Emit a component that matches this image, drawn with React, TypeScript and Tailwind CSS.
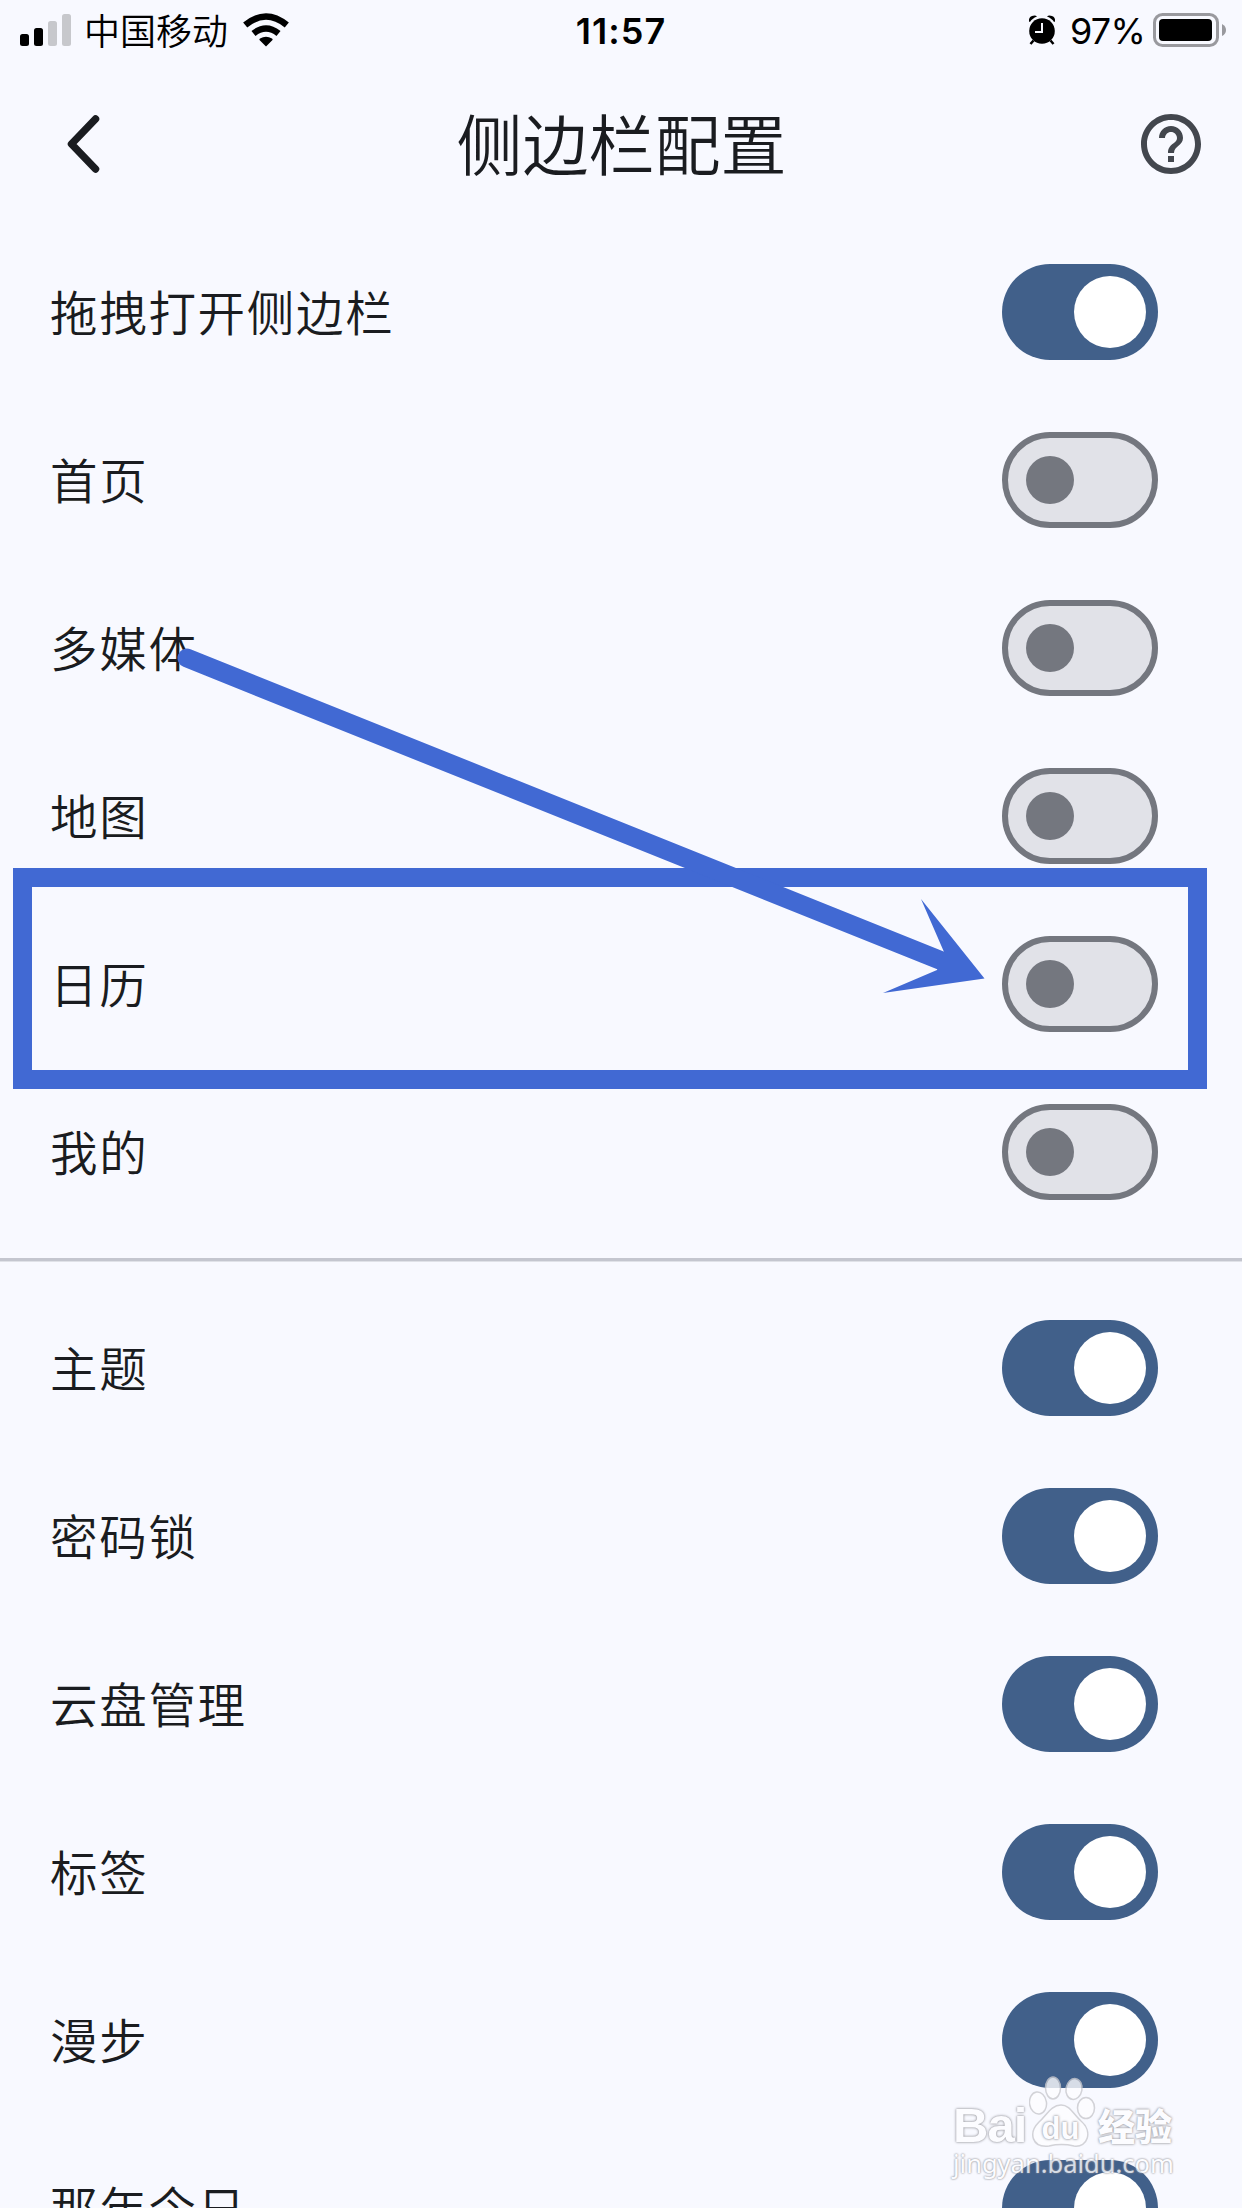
import clsx from 'clsx'

interface SettingItem {
  label: string
  on: boolean
}

const primaryItems: SettingItem[] = [
  { label: '拖拽打开侧边栏', on: true },
  { label: '首页', on: false },
  { label: '多媒体', on: false },
  { label: '地图', on: false },
  { label: '日历', on: false },
  { label: '我的', on: false },
]

const secondaryItems: SettingItem[] = [
  { label: '主题', on: true },
  { label: '密码锁', on: true },
  { label: '云盘管理', on: true },
  { label: '标签', on: true },
  { label: '漫步', on: true },
  { label: '那年今日', on: true },
]

function StatusBar() {
  return (
    <header className="grid h-[60px] grid-cols-3 items-center text-black">
      <div className="flex items-center pl-5">
        <svg width="51" height="32" viewBox="0 0 51 32" aria-hidden>
          <rect x="0" y="20" width="9" height="12" rx="2.5" />
          <rect x="14" y="14" width="9" height="18" rx="2.5" />
          <rect x="28" y="7" width="9" height="25" rx="2.5" fill="#c7c8cc" />
          <rect x="42" y="0" width="9" height="32" rx="2.5" fill="#c7c8cc" />
        </svg>
        <span className="ml-[13px] -mt-0.5 text-[36px] leading-none font-[350]">中国移动</span>
        <svg className="ml-[15px]" width="46" height="34" viewBox="0 0 46 34" aria-hidden>
          <path d="M23 33.500 16.500 27Q16 26 17 25.500 23 22 29 25.500 30 26 29.500 27Z" />
          <path d="M10.500 20.500Q23 10.500 35.500 20.500" fill="none" stroke="#000" strokeWidth="6.500" />
          <path d="M2.200 12Q23 -5 43.800 12" fill="none" stroke="#000" strokeWidth="6.500" />
        </svg>
      </div>
      <time className="pt-0.5 text-center font-['Inter','Liberation_Sans',sans-serif] text-[36px] leading-none font-semibold tracking-[1px]">
        11:57
      </time>
      <div className="flex items-center justify-end pr-[15px]">
        <svg width="28" height="30" viewBox="0 0 28 30" aria-hidden>
          <circle cx="14" cy="16" r="12.800" />
          <path d="M1 6.500Q.5 2 4 1T9 1.500Q4 3.500 2 7ZM27 6.500Q27.500 2 24 1T19 1.500Q24 3.500 26 7Z" />
          <path d="M5.500 25.500 2.500 29M22.500 25.500 25.500 29" stroke="#000" strokeWidth="2.500" />
          <path d="M14 8V17H7" fill="none" stroke="#f8f9ff" strokeWidth="2" />
        </svg>
        <span className="ml-3.5 pt-0.5 font-['Inter','Liberation_Sans',sans-serif] text-[36px] leading-none tracking-[-0.8px]">97%</span>
        <svg className="ml-2" width="74" height="34" viewBox="0 0 74 34" aria-hidden>
          <rect x="1.500" y="1.500" width="63" height="31" rx="8" fill="none" stroke="#99999e" strokeWidth="3" />
          <rect x="6" y="6" width="53" height="22" rx="4" />
          <path d="M69 11Q73 13 73 17T69 23Z" fill="#99999e" />
        </svg>
      </div>
    </header>
  )
}

function TitleBar() {
  return (
    <div className="flex h-[168px] items-center justify-between pr-[41px] pl-[64px]">
      <button type="button" aria-label="返回">
        <svg width="38" height="60" viewBox="0 0 38 60" fill="none" aria-hidden>
          <path d="M31.500 5 7.500 30 31.500 55" stroke="#1a1c20" strokeWidth="7.500" strokeLinecap="round" strokeLinejoin="round" />
        </svg>
      </button>
      <h1 className="-mt-1.5 text-[66px] leading-none font-[350]">侧边栏配置</h1>
      <button type="button" aria-label="帮助">
        <svg width="60" height="60" viewBox="2 2 20 20" fill="#43474e" aria-hidden>
          <path d="M11 18h2v-2h-2v2zm1-16C6.480 2 2 6.480 2 12s4.480 10 10 10 10-4.480 10-10S17.520 2 12 2zm0 18c-4.410 0-8-3.590-8-8s3.590-8 8-8 8 3.590 8 8-3.590 8-8 8zm0-14c-2.210 0-4 1.790-4 4h2c0-1.100.9-2 2-2s2 .9 2 2c0 2-3 1.750-3 5h2c0-2.250 3-2.500 3-5 0-2.210-1.790-4-4-4z" />
        </svg>
      </button>
    </div>
  )
}

function Toggle({ on, label }: { on: boolean; label: string }) {
  return (
    <button
      type="button"
      role="switch"
      aria-checked={on}
      aria-label={label}
      className={clsx(
        'flex h-24 w-[156px] shrink-0 items-center rounded-full',
        on ? 'justify-end bg-[#41608a] pr-3' : 'border-6 border-[#74777f] bg-[#e1e2e8] pl-[18px]',
      )}
    >
      <span className={clsx('rounded-full', on ? 'size-[72px] bg-white' : 'size-12 bg-[#74777f]')} />
    </button>
  )
}

function SettingList({ items }: { items: SettingItem[] }) {
  return (
    <ul>
      {items.map((item) => (
        <li key={item.label} className="flex h-[168px] items-center justify-between pr-[84px] pl-[50px]">
          <span className="pb-0.5 text-[47.5px] leading-none font-[350] tracking-[1.7px]">{item.label}</span>
          <Toggle on={item.on} label={item.label} />
        </li>
      ))}
    </ul>
  )
}

// Box and arrow drawn over the list to point at the calendar switch
function Annotation() {
  return (
    <svg className="pointer-events-none absolute inset-0" width="1242" height="2208" viewBox="0 0 1242 2208" aria-hidden>
      <rect x="22.500" y="877.500" width="1175" height="202" fill="none" stroke="#4169d3" strokeWidth="19" />
      <path d="M187 658 942 961" stroke="#4169d3" strokeWidth="19" strokeLinecap="round" />
      <path d="M984.500 978.500 921 899 944 952 937 970 883 993Z" fill="#4169d3" />
    </svg>
  )
}

function Watermark() {
  return (
    <div className="pointer-events-none absolute top-[2075px] left-[953px] w-60 text-[#fdfdff] opacity-80">
      <div className="flex h-[73px] items-end leading-none font-bold [text-shadow:0_0_2px_#8c8c92,0_0_3px_#8c8c92]">
        <span className="w-[76px] font-['Liberation_Sans',sans-serif] text-[49px] leading-[46px] tracking-[-1px]">Bai</span>
        <span className="relative flex h-[76px] w-[69px] items-end justify-center">
          <svg className="absolute top-0 left-0" width="70" height="76" viewBox="0 0 70 76" aria-hidden>
            <g fill="#fdfdff" stroke="#c9c9ce" strokeWidth="1.500">
              <ellipse cx="9" cy="31" rx="8.500" ry="11" transform="rotate(-8 9 31)" />
              <ellipse cx="24" cy="16" rx="7.500" ry="11" />
              <ellipse cx="45" cy="17" rx="8" ry="10.500" transform="rotate(10 45 17)" />
              <ellipse cx="57" cy="36" rx="8.500" ry="10.500" />
              <path d="M32 33C41 33 44 42 52 49 64 59 59 76 45 74 36 72 29 72 20 74 3 76-1 61 10 50 18 43 22 33 32 33Z" />
            </g>
          </svg>
          <span className="relative pr-1.5 pb-1 font-['Liberation_Sans',sans-serif] text-[31px]">du</span>
        </span>
        <span className="mb-0.5 text-[37px] leading-[42px] font-black">经验</span>
      </div>
      <p className="pt-px font-['Noto_Sans',sans-serif] text-[25.5px] leading-[28px] [text-shadow:0_0_2px_#8c8c92,0_0_2px_#8c8c92]">
        jingyan.baidu.com
      </p>
    </div>
  )
}

export default function App() {
  return (
    <main className="relative h-[2208px] w-[1242px] overflow-hidden bg-[#f8f9ff] font-['Noto_Sans_CJK_SC',sans-serif] text-[#1a1c20]">
      <StatusBar />
      <TitleBar />
      <SettingList items={primaryItems} />
      <div className="flex h-12 items-center">
        <hr className="w-full border-y border-t-3 border-t-[#c4c6cf] border-b-[#e0e2e8]" />
      </div>
      <SettingList items={secondaryItems} />
      <Annotation />
      <Watermark />
    </main>
  )
}
